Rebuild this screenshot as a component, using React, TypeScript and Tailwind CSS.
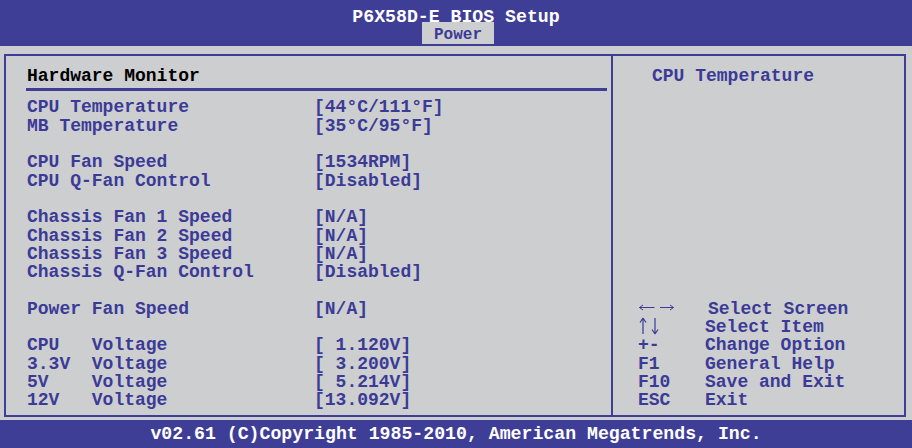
import React from "react";

const rows: [string, string][] = [
  ["CPU Temperature", "[44°C/111°F]"],
  ["MB Temperature", "[35°C/95°F]"],
  ["", ""],
  ["CPU Fan Speed", "[1534RPM]"],
  ["CPU Q-Fan Control", "[Disabled]"],
  ["", ""],
  ["Chassis Fan 1 Speed", "[N/A]"],
  ["Chassis Fan 2 Speed", "[N/A]"],
  ["Chassis Fan 3 Speed", "[N/A]"],
  ["Chassis Q-Fan Control", "[Disabled]"],
  ["", ""],
  ["Power Fan Speed", "[N/A]"],
  ["", ""],
  ["CPU   Voltage", "[ 1.120V]"],
  ["3.3V  Voltage", "[ 3.200V]"],
  ["5V    Voltage", "[ 5.214V]"],
  ["12V   Voltage", "[13.092V]"],
];

function LeftRight() {
  return (
    <svg width="40" height="18" viewBox="0 0 40 18" className="overflow-visible">
      <g stroke="#3b3b97" strokeWidth="1" fill="none">
        <path d="M1.5 7.5h15M1.5 7.5l3.5-2.5M1.5 7.5l3.5 2.5" />
        <path d="M22 7.5h13.5M35.5 7.5l-3.5-2.5M35.5 7.5l-3.5 2.5" />
      </g>
    </svg>
  );
}

function UpDown() {
  return (
    <svg width="40" height="18" viewBox="0 0 40 18" className="overflow-visible">
      <g stroke="#3b3b97" strokeWidth="1.2" fill="none">
        <path d="M5 0v16M5 0l-3 4.5M5 0l3 4.5" />
        <path d="M17 0v16M17 16l-3-4.5M17 16l3-4.5" />
      </g>
    </svg>
  );
}

const help: [React.ReactNode, string, string][] = [
  [<LeftRight />, "Select Screen", "ml-[3px]"],
  [<UpDown />, "Select Item", ""],
  ["+-", "Change Option", ""],
  ["F1", "General Help", ""],
  ["F10", "Save and Exit", ""],
  ["ESC", "Exit", ""],
];

export default function App() {
  return (
    <div className="flex h-[448px] w-[912px] flex-col overflow-hidden bg-[#cdced0] font-['Liberation_Mono',monospace] font-bold">
      {/* top bar */}
      <div className="flex h-[46px] flex-col items-center bg-[#3f3e97]">
        <div className="relative z-10 h-[22px] pt-[6.5px] text-[18.2px] leading-[20px] whitespace-pre text-white">
          P6X58D-E BIOS Setup
        </div>
        <div className="ml-[4px] h-[22px] w-[72px] overflow-hidden bg-[#cdced0] pt-[4px] text-center text-[16px] leading-[18px] text-[#3b3b97]">
          Power
        </div>
      </div>

      {/* frame */}
      <div className="mt-[8px] ml-[4px] flex h-[363px] w-[902px] border-2 border-[#3f3e97]">
        <div className="flex w-[607px] flex-col border-r-2 border-[#3f3e97] pt-[10.5px] pl-[21px]">
          <div className="text-[18px] leading-[18.3px] text-black">Hardware Monitor</div>
          <div className="mt-[3.2px] ml-[-1px] h-[3px] w-[581px] bg-[#3f3e97]" />
          <div className="mt-[7.5px] grid grid-cols-[287px_1fr] text-[18px] leading-[18.3px] text-[#3b3b97]">
            {rows.map(([label, value], i) => (
              <React.Fragment key={i}>
                <div className="h-[18.3px] whitespace-pre">{label}</div>
                <div className="h-[18.3px] whitespace-pre">{value}</div>
              </React.Fragment>
            ))}
          </div>
        </div>

        <div className="flex flex-1 flex-col pt-[10.5px] text-[18px] leading-[18.3px] text-[#3b3b97]">
          <div className="pl-[39px]">CPU Temperature</div>
          <div className="mt-auto mb-[5.4px] pl-[25px]">
            {help.map(([key, text, cls], i) => (
              <div key={i} className="flex h-[18.3px]">
                <div className="w-[67px] whitespace-pre">{key}</div>
                <div className={cls}>{text}</div>
              </div>
            ))}
          </div>
        </div>
      </div>

      {/* footer */}
      <div className="mt-[3px] flex h-[28px] items-center justify-center bg-[#3f3e97] text-[18.2px] leading-[20px] whitespace-pre text-white">
        v02.61 (C)Copyright 1985-2010, American Megatrends, Inc.
      </div>
    </div>
  );
}
